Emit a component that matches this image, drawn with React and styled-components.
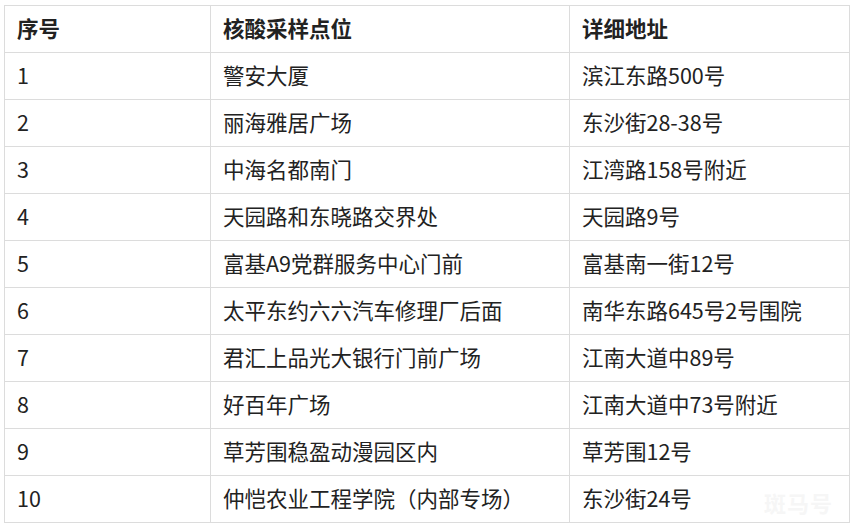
import styled, { createGlobalStyle } from "styled-components";

const GlobalStyle = createGlobalStyle`
  html, body {
    margin: 0;
    padding: 0;
    background: #ffffff;
  }
  body {
    font-family: "Noto Sans CJK SC", "Noto Sans", sans-serif;
    color: #222;
  }
`;

const rows = [
  ["1", "警安大厦", "滨江东路500号"],
  ["2", "丽海雅居广场", "东沙街28-38号"],
  ["3", "中海名都南门", "江湾路158号附近"],
  ["4", "天园路和东晓路交界处", "天园路9号"],
  ["5", "富基A9党群服务中心门前", "富基南一街12号"],
  ["6", "太平东约六六汽车修理厂后面", "南华东路645号2号围院"],
  ["7", "君汇上品光大银行门前广场", "江南大道中89号"],
  ["8", "好百年广场", "江南大道中73号附近"],
  ["9", "草芳围稳盈动漫园区内", "草芳围12号"],
  ["10", "仲恺农业工程学院（内部专场）", "东沙街24号"],
];

export default function App() {
  return (
    <>
      <GlobalStyle />
      <Page>
        <Table>
          <colgroup>
            <col style={{ width: 206 }} />
            <col style={{ width: 359 }} />
            <col style={{ width: 280 }} />
          </colgroup>
          <thead>
            <tr>
              <Th>序号</Th>
              <Th>核酸采样点位</Th>
              <Th>详细地址</Th>
            </tr>
          </thead>
          <tbody>
            {rows.map((r) => (
              <tr key={r[0]}>
                <Td>{r[0]}</Td>
                <Td>{r[1]}</Td>
                <Td>{r[2]}</Td>
              </tr>
            ))}
          </tbody>
        </Table>
        <Watermark>斑马号</Watermark>
      </Page>
    </>
  );
}

const Page = styled.div`
  position: relative;
  width: 858px;
  height: 529px;
  padding: 5px 0 0 4px;
  box-sizing: border-box;
  overflow: hidden;
`;

const Table = styled.table`
  width: 846px;
  border-collapse: collapse;
  table-layout: fixed;
`;

const Th = styled.th`
  height: 47px;
  padding: 0 0 2px 12px;
  border: 1px solid #dcdcdc;
  text-align: left;
  font-size: 21.5px;
  line-height: 1;
  font-weight: 700;
  color: #222;
  box-sizing: border-box;
`;

const Td = styled.td`
  height: 47px;
  padding: 0 0 2px 12px;
  border: 1px solid #dcdcdc;
  font-size: 21.5px;
  line-height: 1;
  font-weight: 400;
  color: #222;
  white-space: nowrap;
  box-sizing: border-box;
`;

const Watermark = styled.div`
  position: absolute;
  left: 764px;
  top: 489px;
  font-size: 22px;
  line-height: 26px;
  font-weight: 700;
  color: #f6f6f6;
  letter-spacing: 1px;
  pointer-events: none;
`;
